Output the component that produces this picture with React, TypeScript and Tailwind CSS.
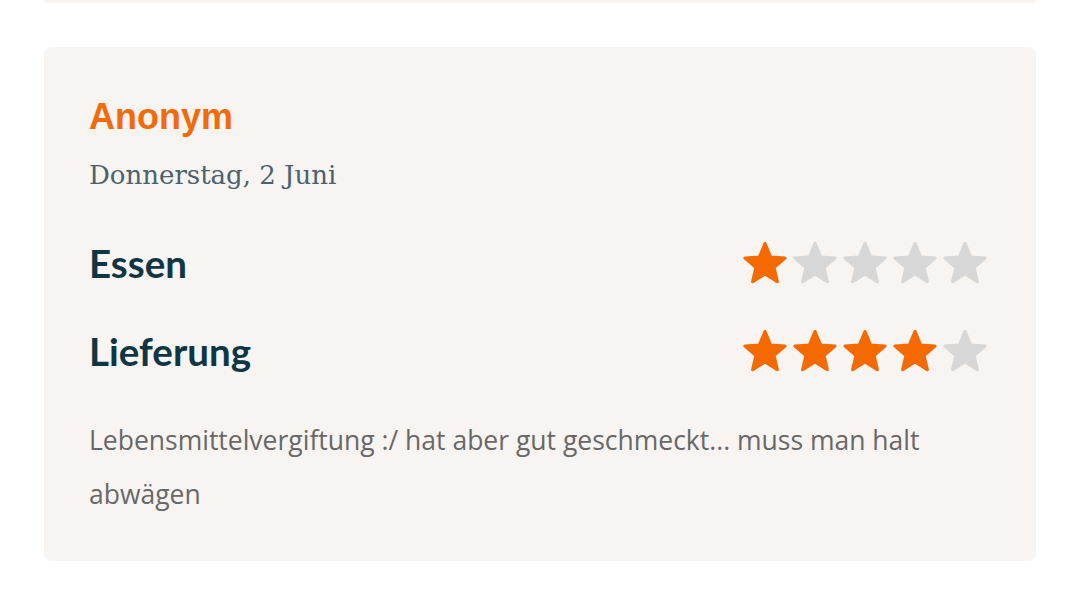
import React from 'react';

const STAR_POINTS =
  '12,2.3 14.76,8.99 21.99,9.56 16.47,14.25 18.17,21.29 12,17.5 5.83,21.29 7.53,14.25 2.01,9.56 9.24,8.99';

const Star: React.FC<{ filled: boolean }> = ({ filled }) => (
  <svg
    viewBox="0 0 24 24"
    className={`h-[48px] w-[48px] ${filled ? 'text-[#f56a00]' : 'text-[#d7d7d7]'}`}
  >
    <polygon
      points={STAR_POINTS}
      fill="currentColor"
      stroke="currentColor"
      strokeWidth={1.6}
      strokeLinejoin="round"
    />
  </svg>
);

const Rating: React.FC<{ label: string; value: number }> = ({ label, value }) => (
  <div className="flex items-center justify-between">
    <span className="text-[38.5px] font-bold leading-none text-[#0f3645] [font-family:Lato,sans-serif]">
      {label}
    </span>
    <div className="mr-[2px] flex gap-[2px]">
      {[1, 2, 3, 4, 5].map((i) => (
        <Star key={i} filled={i <= value} />
      ))}
    </div>
  </div>
);

export default function App() {
  return (
    <div className="min-h-screen bg-white">
      {/* previous review card, only its bottom edge is visible */}
      <div className="ml-[44px] mr-[37px] h-[3px] rounded-b-md bg-[#f7f4f1]" />

      <div className="ml-[44px] mr-[37px] mt-[44px] rounded-lg bg-[#f7f4f1] px-[45px] pt-[50px] pb-[40px]">
        <h3 className="text-[36px] font-bold leading-[40px] text-[#f26a0a] [font-family:'Liberation_Sans',sans-serif]">
          Anonym
        </h3>
        <p className="mt-[21px] text-[26px] leading-[35px] text-[#4a6270] [font-family:'DejaVu_Serif',serif]">
          Donnerstag, 2 Juni
        </p>

        <div className="mt-[46px] flex flex-col gap-[40px]">
          <Rating label="Essen" value={1} />
          <Rating label="Lieferung" value={4} />
        </div>

        <p className="mt-[38px] text-[26.5px] leading-[54px] text-[#686868] [font-family:'Open_Sans',sans-serif]">
          Lebensmittelvergiftung :/ hat aber gut geschmeckt... muss man halt
          <br />
          abwägen
        </p>
      </div>
    </div>
  );
}
